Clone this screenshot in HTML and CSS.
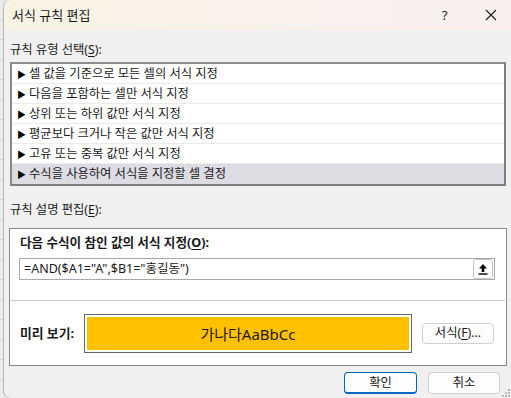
FILE: index.html
```html
<!DOCTYPE html>
<html lang="ko">
<head>
    <meta charset="UTF-8">
    <meta name="viewport" content="width=device-width, initial-scale=1.0">
    <title>서식 규칙 편집</title>
    <link rel="stylesheet" href="styles.css">
</head>
<body>
    <div class="sheet-edge"></div>
    <div class="dialog">
        <div class="titlebar">
            <span class="title">서식 규칙 편집</span>
            <span class="help">?</span>
            <svg class="close" width="12" height="12" viewBox="0 0 12 12">
                <path d="M1 1 L11 11 M11 1 L1 11" stroke="#1a1a1a" stroke-width="1.1" fill="none"/>
            </svg>
        </div>

        <div class="content">
            <div class="label">규칙 유형 선택(<u>S</u>):</div>
            <ul class="rule-list">
                <li><span class="arrow">▶</span>셀 값을 기준으로 모든 셀의 서식 지정</li>
                <li><span class="arrow">▶</span>다음을 포함하는 셀만 서식 지정</li>
                <li><span class="arrow">▶</span>상위 또는 하위 값만 서식 지정</li>
                <li><span class="arrow">▶</span>평균보다 크거나 작은 값만 서식 지정</li>
                <li><span class="arrow">▶</span>고유 또는 중복 값만 서식 지정</li>
                <li class="selected"><span class="arrow">▶</span>수식을 사용하여 서식을 지정할 셀 결정</li>
            </ul>

            <div class="label label-desc">규칙 설명 편집(<u>E</u>):</div>
            <div class="panel">
                <div class="panel-top">
                    <div class="panel-head">다음 수식이 참인 값의 서식 지정(<u>O</u>):</div>
                    <div class="formula">
                        <span class="formula-text">=AND($A1="A",$B1="홍길동")</span>
                        <span class="collapse-btn">
                            <svg width="10" height="12" viewBox="0 0 10 12">
                                <path d="M5 1 L9 5.5 L6.3 5.5 L6.3 9 L3.7 9 L3.7 5.5 L1 5.5 Z" fill="#000"/>
                                <rect x="0.5" y="10.3" width="9" height="1.4" fill="#000"/>
                            </svg>
                        </span>
                    </div>
                </div>
                <div class="preview-row">
                    <span class="preview-label">미리 보기:</span>
                    <div class="preview-box">
                        <div class="preview-fill">가나다AaBbCc</div>
                    </div>
                    <button class="btn btn-format">서식(<u>F</u>)...</button>
                </div>
            </div>

            <div class="actions">
                <button class="btn btn-ok">확인</button>
                <button class="btn">취소</button>
            </div>
        </div>

        <svg class="grip" width="10" height="10" viewBox="0 0 10 10">
            <rect x="7" y="1" width="2" height="2" fill="#b8b8b8"/>
            <rect x="4" y="4" width="2" height="2" fill="#b8b8b8"/>
            <rect x="7" y="4" width="2" height="2" fill="#b8b8b8"/>
            <rect x="1" y="7" width="2" height="2" fill="#b8b8b8"/>
            <rect x="4" y="7" width="2" height="2" fill="#b8b8b8"/>
            <rect x="7" y="7" width="2" height="2" fill="#b8b8b8"/>
        </svg>
    </div>
</body>
</html>
```

FILE: styles.css
```css
* {
    box-sizing: border-box;
}
body {
    margin: 0;
    width: 511px;
    height: 398px;
    overflow: hidden;
    display: flex;
    background-color: #e4e4e4;
    font-family: "Segoe UI", "Noto Sans", "Noto Sans CJK KR", sans-serif;
    font-size: 12.3px;
    color: #1a1a1a;
}
u {
    text-decoration-thickness: 1px;
    text-underline-offset: 2px;
}
.sheet-edge {
    width: 3px;
    flex: none;
    background: repeating-linear-gradient(180deg, #ececec 0, #ececec 19px, #d4d4d4 19px, #d4d4d4 20px);
}
.dialog {
    position: relative;
    flex: 1;
    height: 398px;
    background-color: #f0f0f0;
    border-left: 1px solid #b4b4b4;
    border-radius: 8px 0 0 8px;
    overflow: hidden;
}
.titlebar {
    height: 30px;
    display: flex;
    align-items: center;
    padding-left: 8px;
    background: linear-gradient(90deg, #f8f3e3, #f9f1ec 60%, #f9efee);
}
.title {
    flex: 1;
    font-size: 13px;
    line-height: 16px;
}
.help {
    width: 12px;
    margin-right: 31px;
    font-size: 13px;
}
.close {
    margin-right: 14px;
}
.content {
    padding: 0 3px 0 6px;
}
.label {
    margin-top: 12px;
    line-height: 16px;
    height: 16px;
}
.rule-list {
    list-style: none;
    margin: 4px 0 0 0;
    padding: 0;
    width: 496px;
    height: 124px;
    background: #fff;
    border: 2px solid #7d7d7d;
    border-top-color: #8e8e8e;
    border-left-color: #8a8a8a;
}
.rule-list li {
    height: 20px;
    line-height: 19px;
    padding-left: 5px;
    border-bottom: 1px solid #ebebeb;
    white-space: nowrap;
}
.rule-list li.selected {
    background-color: #dddce3;
    border-bottom: none;
    height: 20px;
}
.arrow {
    display: inline-block;
    width: 12px;
    font-size: 9px;
    color: #000;
}
.label-desc {
    margin-top: 16px;
}
.panel {
    margin-top: 10px;
    margin-left: -1px;
    width: 498px;
    height: 138px;
    background: #fff;
    border: 1px solid #8a8a8a;
}
.panel-top {
    padding: 6px 10px 0 8px;
    height: 72px;
    border-bottom: 1px solid #c8c8c8;
    margin: 0 1px;
}
.panel-head {
    font-weight: bold;
    font-size: 12.6px;
    line-height: 16px;
    padding-left: 1px;
}
.formula {
    margin-top: 7px;
    height: 22px;
    display: flex;
    align-items: center;
    border: 1px solid #a8a8a8;
    padding: 0 1px 0 4px;
}
.formula-text {
    flex: 1;
    font-size: 12.5px;
    line-height: 16px;
}
.collapse-btn {
    width: 20px;
    height: 20px;
    display: flex;
    align-items: center;
    justify-content: center;
    background: #fff;
    border: 1px solid #c4c4c4;
    border-radius: 3px;
}
.preview-row {
    display: flex;
    align-items: center;
    height: 64px;
    padding: 0 0 0 10px;
}
.preview-label {
    width: 64px;
    font-weight: bold;
    font-size: 12.8px;
    line-height: 16px;
}
.preview-box {
    width: 328px;
    height: 39px;
    padding: 2px;
    border: 1px solid #666;
}
.preview-fill {
    height: 100%;
    background-color: #ffc000;
    display: flex;
    align-items: center;
    justify-content: center;
    font-size: 15px;
    color: #1a1a1a;
}
.btn {
    width: 72px;
    height: 22px;
    font-family: inherit;
    font-size: 12.3px;
    color: #1a1a1a;
    background-color: #fdfdfd;
    border: 1px solid #cfcfcf;
    border-radius: 4px;
    padding: 0;
    line-height: 16px;
}
.btn-format {
    margin-left: 10px;
    height: 21px;
}
.actions {
    display: flex;
    justify-content: flex-end;
    gap: 11px;
    margin-top: 6px;
    padding-right: 8px;
}
.btn-ok {
    width: 73px;
    border: 1px solid #0067c0;
    border-bottom-width: 2px;
}
.grip {
    position: absolute;
    right: 0;
    bottom: 0;
}
```
